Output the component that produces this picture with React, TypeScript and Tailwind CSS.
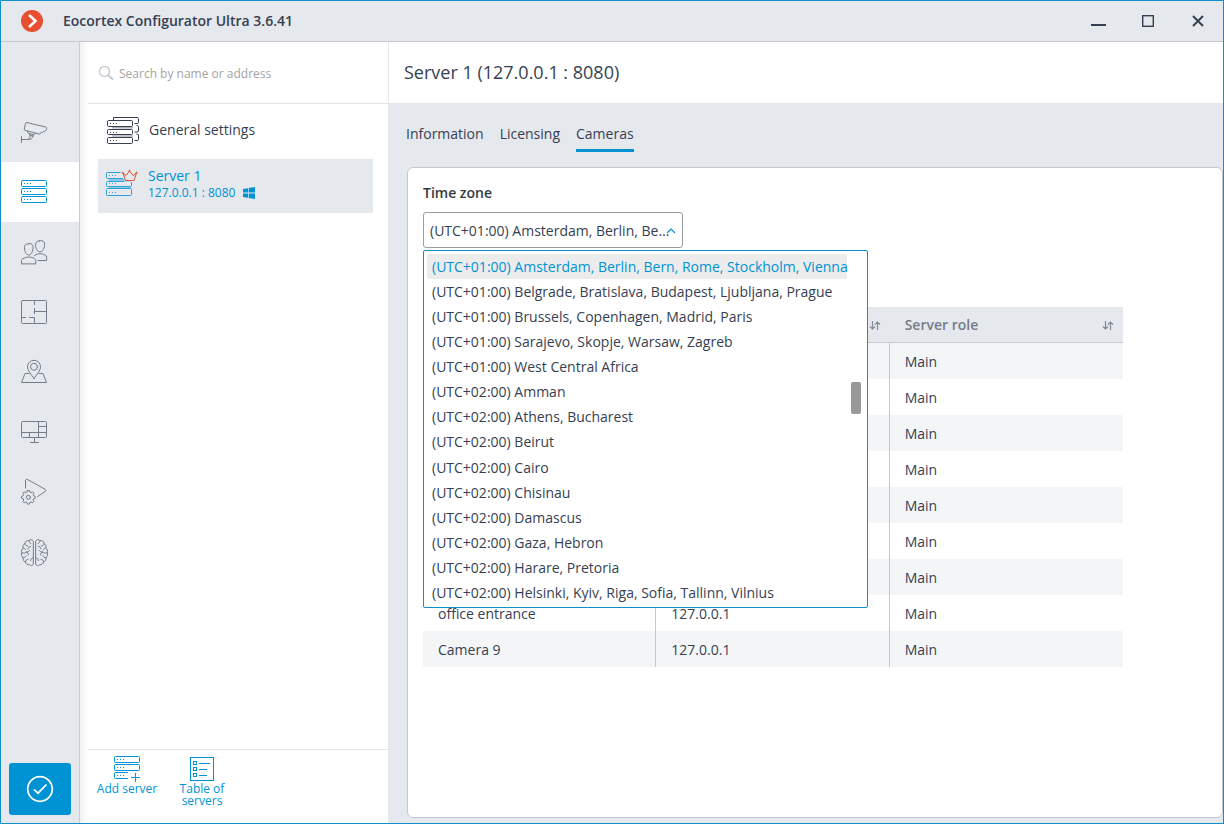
import type { ReactNode } from "react";
import { useState } from "react";

const timeZones = [
  "(UTC+01:00) Amsterdam, Berlin, Bern, Rome, Stockholm, Vienna",
  "(UTC+01:00) Belgrade, Bratislava, Budapest, Ljubljana, Prague",
  "(UTC+01:00) Brussels, Copenhagen, Madrid, Paris",
  "(UTC+01:00) Sarajevo, Skopje, Warsaw, Zagreb",
  "(UTC+01:00) West Central Africa",
  "(UTC+02:00) Amman",
  "(UTC+02:00) Athens, Bucharest",
  "(UTC+02:00) Beirut",
  "(UTC+02:00) Cairo",
  "(UTC+02:00) Chisinau",
  "(UTC+02:00) Damascus",
  "(UTC+02:00) Gaza, Hebron",
  "(UTC+02:00) Harare, Pretoria",
  "(UTC+02:00) Helsinki, Kyiv, Riga, Sofia, Tallinn, Vilnius",
];

const columns = ["", "", "Server role"];

const cameras = [
  { name: "", server: "", role: "Main" },
  { name: "", server: "", role: "Main" },
  { name: "", server: "", role: "Main" },
  { name: "", server: "", role: "Main" },
  { name: "", server: "", role: "Main" },
  { name: "", server: "", role: "Main" },
  { name: "", server: "", role: "Main" },
  { name: "office entrance", server: "127.0.0.1", role: "Main" },
  { name: "Camera 9", server: "127.0.0.1", role: "Main" },
];

function NavIcon({ children }: { children: ReactNode }) {
  return (
    <svg width="28" height="28" viewBox="0 0 28 28" fill="none" stroke="currentColor" strokeWidth="1" strokeLinecap="round" strokeLinejoin="round">
      {children}
    </svg>
  );
}

function CameraIcon() {
  return (
    <NavIcon>
      <path d="M6.6 4.5 25.6 9q1.2.4 1 1.6v.8l-1.8 2.2-1.2-.2-1.1 1.2-1.3-.1-1.7 1.6L5 12.4q-.9-.4-.7-1.3L5.5 5.3q.3-.9 1.1-.8Z" />
      <path d="M7.3 13.2q0 2 1.7 2.4l4.4 1q1.4.2 1.9-1.5M9.5 16v1.2l3.6.9v-1.3M10.3 17.6c-.1 2.5-1.2 3.9-3.6 3.9H1.5M13 18c-.6 2.3-1.7 3.5-4.5 3.5M1.5 18.5v6" />
    </NavIcon>
  );
}

function ServersIcon() {
  return (
    <NavIcon>
      {[2.5, 10.5, 18.5].map((y) => (
        <g key={y}>
          <rect x="1.5" y={y} width="25" height="6" rx="1" />
          <path d={`M4.5 ${y + 3}h.1M7.5 ${y + 3}h.1M10.5 ${y + 3}h.1`} strokeLinecap="square" />
        </g>
      ))}
    </NavIcon>
  );
}

function UsersIcon() {
  return (
    <NavIcon>
      <path d="M8.8 5.6c2.8-.5 4.4 1 4.3 3.7-.1 3.6-1.6 7.7-4.3 7.7s-4.3-4-4.3-7.2C4.5 7 5.8 5.6 7.6 6q.7 0 1.2-.4Z" />
      <path d="M1.5 25.5v-2.8c0-1 .6-1.6 1.5-2 1.9-.9 3.5-1.7 5.8-1.7s4.1.8 5.8 1.7c.8.4 1.2 1 1.2 2v2.8Z" />
      <path d="M19.6 2.8c2.9-.7 4.9.4 5 3.2.1 3.7-1.8 7.9-4.5 7.9s-4.5-3.6-4.6-6.8c0-2.5 1.2-4.2 4.1-4.3Z" />
      <path d="M14.5 17.6c1.8-1.3 3.5-1.9 5.6-1.9 2.2 0 4 .7 5.4 1.5.8.5 1.1 1.1 1.1 2v3.3H18" />
    </NavIcon>
  );
}

function PlanIcon() {
  return (
    <NavIcon>
      <rect x="1.5" y="2.5" width="25" height="23" rx="1" />
      <path d="M14.5 2.5v4M14.5 10.5v5M14.5 13.5h12M1.5 19.5h4M9.5 19.5h5v6" />
    </NavIcon>
  );
}

function MapIcon() {
  return (
    <NavIcon>
      <path d="M14 20.5c-3-4.4-6.5-7.9-6.5-11.7a6.5 6.5 0 0 1 13 0c0 3.8-3.5 7.3-6.5 11.7Z" />
      <circle cx="14" cy="8.8" r="3.5" />
      <path d="M9 15.5H5l-3.5 9h25l-3.5-9h-4" />
    </NavIcon>
  );
}

function MonitorIcon() {
  return (
    <NavIcon>
      <rect x="1.5" y="3.5" width="25" height="16" rx="1" />
      <path d="M18.5 3.5v16M18.5 8.5h8M1.5 14.5h25M9.5 14.5v5M14.5 19.5v5M10.5 24.5h8" />
    </NavIcon>
  );
}

function AutomationIcon() {
  return (
    <NavIcon>
      <path d="M5.5 10V3c0-1.5 1-2 2.2-1.4L25 11.2c1 .7 1 1.7 0 2.4l-7.5 5" />
      <path d="m7.4 12.500 2 0 .5 1.600 1.200.5 1.500-.8 1.300 1.300-.8 1.500.5 1.200 1.600.5v2l-1.600.5-.5 1.200.8 1.500-1.300 1.300-1.500-.8-1.200.5-.5 1.600h-2l-.5-1.600-1.200-.5-1.500.8-1.300-1.300.8-1.500-.5-1.200-1.600-.5v-2l1.600-.5.500-1.200-.8-1.500 1.300-1.300 1.500.8 1.200-.5Z" />
      <circle cx="8.4" cy="19.3" r="2" />
    </NavIcon>
  );
}

function BrainIcon() {
  const half =
    "M13.200 2.500C12.500.8 10 .6 9 2.200 7 1.500 4.800 3 5 5.200 3 6 2.400 8 3.300 9.500c-1.600 1-2.200 3-1.500 4.500-.8 2-.4 4 1.200 5-.4 2 .7 4 2.500 4.500.3 2 2 3 4 2.700 1.200 1.500 3.200 1.200 3.700-.4ZM9 2.200c0 1.500.6 2.300 2 2.800M5 5.200c.2 1.500 1.200 2.300 2.700 2.300M10.500 8C9 8 8 9 8 10.500M3.300 9.500c1 .2 1.900.7 2.200 1.700M1.800 14c1.700 1.200 3.400.8 4.500-.500M6.300 13.500c1.500.2 2.500 0 3.200-1.500M6.300 13.500c1.300.5 2.200 1.500 2.200 3M3 19c1.500.5 2.800-.2 3-1.700M5.500 23.500c0-1.700 1-2.600 2.500-2.700M13.200 19.500c-1.500 0-2.700 1-2.700 2.500";
  return (
    <NavIcon>
      <path d={half} transform="translate(0 .5)" />
      <path d={half} transform="matrix(-1 0 0 1 29 .5)" />
    </NavIcon>
  );
}

function ServerGroupIcon() {
  return (
    <svg width="32" height="28" viewBox="0 0 32 28" fill="none" stroke="currentColor">
      <path d="M6.5 4V1.500H30q1.500 0 1.500 1v4q0 1-1.500 1h-2.500M29.500 9.500q2 0 2 1v4.500q0 1-1.500 1h-2.500M29.500 18q2 0 2 1v4.500q0 1-1.500 1h-2.500" />
      <path d="M5 11.800h21M5 20h21" strokeWidth="1.5" opacity="0.4" />
      {[4.5, 13.5, 21.5].map((y) => (
        <g key={y}>
          <rect x="0.5" y={y} width="25" height={y === 13.5 ? 5 : 6} rx="1" fill="#fff" />
          <path d={`M3 ${y + 3}h1M6 ${y + 3}h1M9 ${y + 3}h1`} />
        </g>
      ))}
    </svg>
  );
}

function MainServerIcon() {
  return (
    <svg width="32" height="28" viewBox="0 0 32 28" fill="none" stroke="#2ba3d8" className="overflow-visible">
      <path d="M3 8h22v2.500H3zM3 16h22v1.500H3z" fill="#8cc8e6" stroke="none" />
      <path d="M14.500 1.500h-13q-1 0-1 1v4q0 1 1 1H17M25.500 11v3.500q0 1-1 1h-23q-1 0-1-1v-3q0-1 1-1H18" />
      <rect x="0.5" y="17.5" width="25" height="7" rx="1" />
      <path d="M3 4.500h1M6 4.500h1M9 4.500h1M3 12.500h1M6 12.500h1M9 12.500h1M3 21.500h1M6 21.500h1M9 21.500h1" />
      <g stroke="#e8502f">
        <path d="m17 2 2.500 7.500h8.500L30.500 2 27 4.500 23.500 0 20 4.500Z" fill="#e5e8ed" strokeLinejoin="round" />
        <circle cx="16.7" cy="1.7" r="0.6" />
        <circle cx="23.5" cy="-0.2" r="0.6" />
        <circle cx="30.6" cy="1.7" r="0.6" />
      </g>
    </svg>
  );
}

function AddServerIcon() {
  return (
    <svg width="28" height="28" viewBox="0 0 28 28" fill="none" stroke="currentColor">
      <rect x="1.5" y="1.5" width="25" height="6" rx="1" />
      <rect x="1.5" y="9.5" width="25" height="6" rx="1" />
      <path d="M15 17.500H2.500q-1 0-1 1v4q0 1 1 1H15M22.500 18v9M18 22.500h9" />
      <path d="M4 4.500h1M7 4.500h1M10 4.500h1M4 12.500h1M7 12.500h1M10 12.500h1M4 20.500h1M7 20.500h1M10 20.500h1" />
    </svg>
  );
}

function ServerTableIcon() {
  return (
    <svg width="28" height="28" viewBox="0 0 28 28" fill="none" stroke="currentColor">
      <rect x="2.5" y="2.5" width="23" height="23" />
      <rect x="5.5" y="6.5" width="3" height="3" />
      <rect x="5.5" y="12.5" width="3" height="3" />
      <rect x="5.5" y="18.5" width="3" height="3" />
      <path d="M11 8.500h11M11 14.500h8M11 20.500h8" />
    </svg>
  );
}

function SortIcon() {
  return (
    <svg width="12" height="12" viewBox="0 0 12 12" fill="none" stroke="#858a99" strokeWidth="1.2">
      <path d="M3.500 2v8M1 7.500 3.500 10 6 7.500M8.500 11V3M6 5.500 8.500 3 11 5.500" />
    </svg>
  );
}

const sections = [
  { label: "Cameras", icon: <CameraIcon /> },
  { label: "Servers", icon: <ServersIcon />, active: true },
  { label: "Users", icon: <UsersIcon /> },
  { label: "Plans", icon: <PlanIcon /> },
  { label: "Maps", icon: <MapIcon /> },
  { label: "Monitors", icon: <MonitorIcon /> },
  { label: "Automation", icon: <AutomationIcon /> },
  { label: "Analytics", icon: <BrainIcon /> },
];

function TitleBar() {
  return (
    <header className="flex h-[41px] shrink-0 items-center border-b border-[#c6c8cf] bg-[#e5e8ed] pl-5">
      <svg width="22" height="22" viewBox="0 0 22 22">
        <circle cx="11" cy="11" r="11" fill="#e84e30" />
        <path d="m8 5 6.500 6L8 17" fill="none" stroke="#fff" strokeWidth="2.6" />
      </svg>
      <h1 className="ml-5 flex-1 text-sm font-semibold">Eocortex Configurator Ultra 3.6.41</h1>
      <button aria-label="Minimize" className="flex h-10 w-[50px] items-center justify-center">
        <svg width="16" height="14" viewBox="0 0 16 14" fill="currentColor">
          <path d="M1 10h15v2H1z" />
        </svg>
      </button>
      <button aria-label="Maximize" className="flex h-10 w-[50px] items-center justify-center">
        <svg width="12" height="12" viewBox="0 0 12 12" fill="none" stroke="currentColor">
          <rect x="0.7" y="0.7" width="10.6" height="10.6" strokeWidth="1.4" />
        </svg>
      </button>
      <button aria-label="Close" className="flex h-10 w-[50px] items-center justify-center">
        <svg width="12" height="12" viewBox="0 0 12 12" stroke="currentColor" strokeWidth="2">
          <path d="m1 1 10 10M11 1 1 11" />
        </svg>
      </button>
    </header>
  );
}

function Sidebar() {
  return (
    <nav className="flex w-[79px] shrink-0 flex-col border-r border-[#c9ccd5] bg-[#e5e8ed] pt-[60px] text-[#757b89]">
      {sections.map((section) => (
        <button
          key={section.label}
          aria-label={section.label}
          className={
            section.active
              ? "flex h-[60px] items-center bg-white pl-[19px] text-[#0093d3]"
              : "flex h-[60px] items-center pl-[19px]"
          }
        >
          {section.icon}
        </button>
      ))}
      <button
        aria-label="Apply"
        className="mx-2 mt-auto mb-2 flex h-[52px] w-[62px] items-center justify-center rounded-[3px] bg-[#0093d3] text-white"
      >
        <svg width="28" height="28" viewBox="0 0 28 28" fill="none" stroke="currentColor" strokeWidth="1.7">
          <circle cx="14" cy="14" r="12.3" />
          <path d="m8 14.500 4 3.700 8.500-8.700" />
        </svg>
      </button>
    </nav>
  );
}

function ServerPanel() {
  return (
    <aside className="flex w-[309px] shrink-0 border-r border-[#e5e8ed]">
      <div className="w-2 bg-linear-to-r from-[#f0f1f4] to-white" />
      <div className="flex flex-1 flex-col">
        <label className="flex h-[62px] items-center border-b border-[#e2e4e8] pt-0.5 pl-2.5">
          <svg width="16" height="16" viewBox="0 0 16 16" fill="none" stroke="#c3c5cd" strokeWidth="1.2" className="mr-[5px]">
            <circle cx="6.5" cy="5.5" r="5" />
            <path d="m10.200 9.200 4.800 4.300" strokeWidth="1.8" />
          </svg>
          <input
            type="text"
            aria-label="Search by name or address"
            placeholder="Search by name or address"
            className="h-6 flex-1 text-xs outline-none placeholder:text-[#a3a3a3]"
          />
        </label>
        <button className="flex h-[55px] items-center pb-[3px] pl-[19px] text-left text-sm">
          <ServerGroupIcon />
          <span className="ml-2.5">General settings</span>
        </button>
        <button className="mr-[15px] ml-2.5 flex h-[54px] items-center bg-[#e5e8ed] pb-0.5 pl-2 text-left text-[#0093d3]">
          <MainServerIcon />
          <span className="ml-2.5 flex flex-col">
            <span className="text-sm leading-4">Server 1</span>
            <span className="flex items-center text-xs leading-[18px]">
              127.0.0.1 : 8080
              <svg width="12" height="12" viewBox="0 0 12 12" fill="currentColor" className="ml-2">
                <path d="M0 2 5 1.200v4.400H0zM5.700 1.100 12 0v5.600H5.700zM0 6.400h5v4.400L0 10zM5.700 6.400H12V12l-6.300-1.100z" />
              </svg>
            </span>
          </span>
        </button>
        <div className="mt-auto flex h-[74px] border-t border-[#e2e4e8] pt-[5px] text-xs leading-3 text-[#0093d3]">
          <button className="flex w-[78px] flex-col items-center">
            <AddServerIcon />
            Add server
          </button>
          <button className="flex w-[72px] flex-col items-center">
            <ServerTableIcon />
            <span className="w-14">Table of servers</span>
          </button>
        </div>
      </div>
    </aside>
  );
}

function TimeZonePicker() {
  const [zone, setZone] = useState(timeZones[0]);

  return (
    <div className="relative">
      <label htmlFor="time-zone" className="block text-sm font-semibold text-[#343b3d]">
        Time zone
      </label>
      <div className="mt-[9px] grid w-[260px] items-center">
        <select
          id="time-zone"
          value={zone}
          onChange={(e) => setZone(e.target.value)}
          className="col-start-1 row-start-1 h-9 w-full appearance-none truncate rounded-[3px] border border-[#9b9da5] bg-white pt-0.5 pr-3 pl-1.5 text-sm outline-none"
        >
          {timeZones.map((item) => (
            <option key={item}>{item}</option>
          ))}
        </select>
        <svg width="10" height="8" viewBox="0 0 10 8" fill="none" stroke="#0093d3" className="pointer-events-none col-start-1 row-start-1 mr-[7px] justify-self-end">
          <path d="m1 7 4-4 4 4" strokeWidth="1.2" />
        </svg>
      </div>

      {/* Open list */}
      <div className="absolute top-full left-0 z-10 mt-0.5 flex h-[358px] w-[445px] rounded-[2px] border border-[#0f8fc9] bg-white pt-[3px] pr-1.5 pb-0.5 pl-[3px]">
        <ul role="listbox" aria-label="Time zone" className="flex w-[420px] flex-col justify-between text-sm">
          {timeZones.map((item) => (
            <li
              key={item}
              role="option"
              aria-selected={item === zone}
              onClick={() => setZone(item)}
              className={
                item === zone
                  ? "h-[25px] rounded-[2px] bg-[#ececec] pl-[5px] leading-[25px] whitespace-nowrap text-[#0093d3]"
                  : "h-[25px] pl-[5px] leading-[25px] whitespace-nowrap"
              }
            >
              {item}
            </li>
          ))}
        </ul>
        <div className="mt-32 ml-auto h-8 w-2.5 rounded-[2px] bg-[#999999]" />
      </div>
    </div>
  );
}

function CameraTable() {
  return (
    <table className="mt-[59px] w-[700px] table-fixed border-separate border-spacing-0 text-left text-sm">
      <thead>
        <tr className="h-9 bg-[#e5e8ed] text-[#757b89]">
          {columns.map((title, index) => (
            <th key={index} className="border-b border-[#c6c8cf] py-0 pr-[9px] pl-[15px] font-semibold">
              <div className="flex items-center justify-between">
                <span>{title}</span>
                <SortIcon />
              </div>
            </th>
          ))}
        </tr>
      </thead>
      <tbody>
        {cameras.map((camera, index) => (
          <tr key={index} className="h-9 odd:bg-[#f4f5f7]">
            <td className="border-r border-[#c6c8cf] pt-0.5 pb-0 pl-[15px]">{camera.name}</td>
            <td className="border-r border-[#c6c8cf] pt-0.5 pb-0 pl-[15px]">{camera.server}</td>
            <td className="pt-0.5 pb-0 pl-[15px]">{camera.role}</td>
          </tr>
        ))}
      </tbody>
    </table>
  );
}

export default function App() {
  return (
    <div className="flex min-h-screen flex-col border border-[#0f8fc9] bg-white font-['Open_Sans',sans-serif] text-[#363f52]">
      <TitleBar />
      <div className="flex flex-1">
        <Sidebar />
        <ServerPanel />
        <main className="flex min-w-0 flex-1 flex-col bg-[#e5e8ed]">
          <h2 className="flex h-[61px] items-center bg-white pb-0.5 pl-[15px] text-lg">Server 1 (127.0.0.1 : 8080)</h2>
          <nav className="flex h-[49px] gap-4 pt-[21px] pl-[17px] text-sm">
            <a href="#information">Information</a>
            <a href="#licensing">Licensing</a>
            <a href="#cameras" className="border-b-[3px] border-[#0093d3]">Cameras</a>
          </nav>
          <section className="mt-[15px] mb-[5px] ml-[18px] flex-1 rounded-md border border-[#c6c8cf] bg-white px-[15px] pt-[15px]">
            <TimeZonePicker />
            <CameraTable />
          </section>
        </main>
      </div>
    </div>
  );
}
